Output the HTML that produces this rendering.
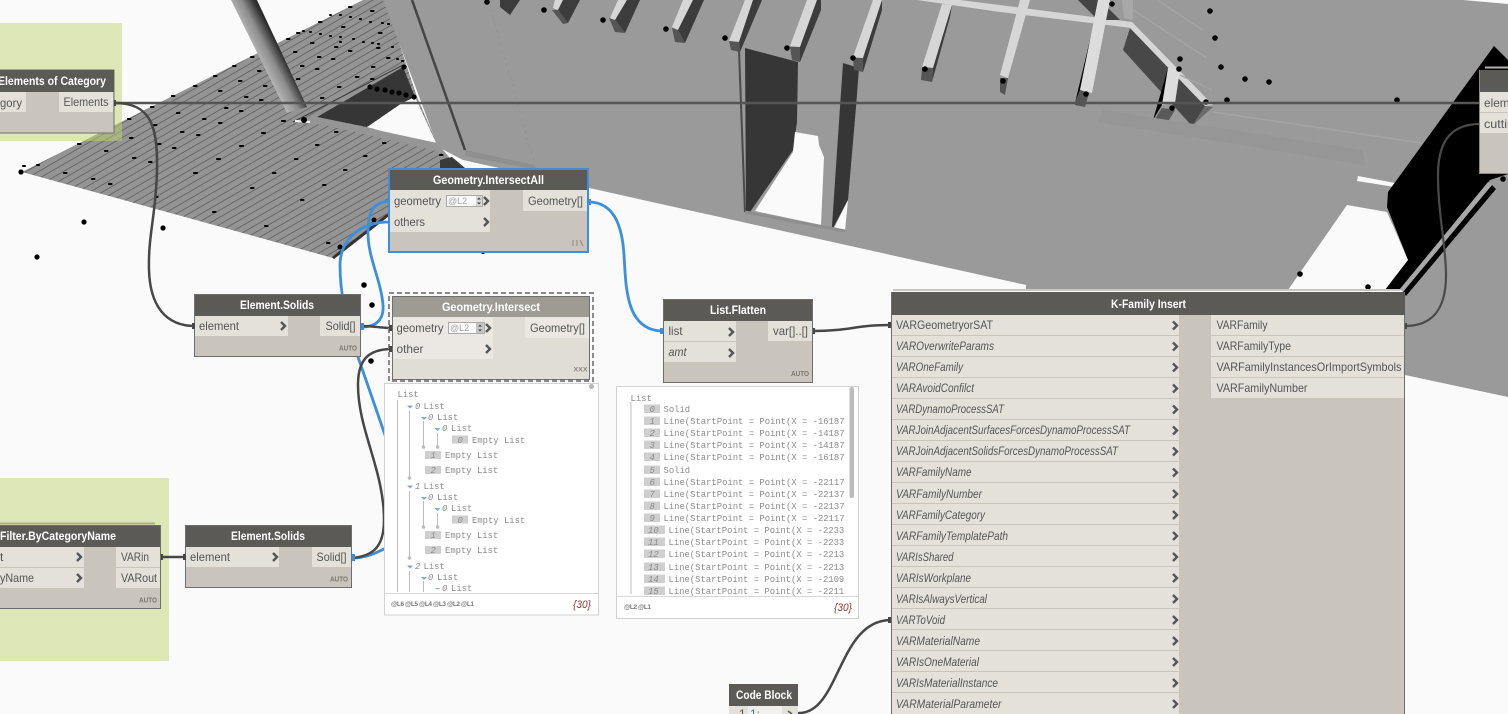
<!DOCTYPE html>
<html><head><meta charset="utf-8"><title>Dynamo graph</title>
<style>
html,body{margin:0;padding:0;background:#fafafa;overflow:hidden}
svg{display:block;position:absolute;left:0;top:0}
text{font-family:"Liberation Sans",sans-serif;font-size:12px;fill:#555}
.h{font-weight:bold;fill:#fff}
.i{font-style:italic}
.m{font-family:"Liberation Mono",monospace;font-size:8.9px;fill:#8c8c8c}
.n{font-family:"Liberation Mono",monospace;font-size:8.9px;font-style:italic;fill:#8c8c8c}
.a{font-size:7.5px;font-weight:bold;fill:#7a766f}
.x{font-size:6px;font-weight:bold;fill:#8a867f}
.l{font-size:6.5px;font-weight:bold;fill:#777}
.c{font-size:11px;font-style:italic;fill:#8a3a34}
.s{font-size:9px;fill:#a5a5a5}
</style></head><body>
<svg width="1508" height="714" viewBox="0 0 1508 714" xmlns="http://www.w3.org/2000/svg">
<defs>
<pattern id="ridge" patternUnits="userSpaceOnUse" width="20" height="6.2" patternTransform="rotate(-30)">
<rect width="20" height="6.2" fill="#949494"/><rect width="20" height=".8" fill="#5e5e5e"/>
</pattern>
<linearGradient id="pipe" gradientUnits="userSpaceOnUse" x1="258" y1="57" x2="283" y2="44">
<stop offset="0" stop-color="#b5b5b5"/><stop offset=".4" stop-color="#8d8d8d"/><stop offset=".82" stop-color="#2b2b2b"/><stop offset="1" stop-color="#3a3a3a"/>
</linearGradient>
</defs>
<rect width="1508" height="714" fill="#fafafa"/>

<!-- floor plate -->
<polygon points="22,172 363,0 385,0 417,97 440,150 456,165 388,215 333,258" fill="url(#ridge)"/>
<polygon points="402,103 415,97 438,147 367,127" fill="#fafafa"/>
<polygon points="317,117 403,67 415,97 402,103 367,127" fill="#363636"/>
<polygon points="293,122 317,117 437,143 456,165 440,152 325,125" fill="#969696"/>
<path d="M293 122L403 65" stroke="#3c3c3c" stroke-width="1"/>
<path d="M333 258L388 215" stroke="#333" stroke-width="3"/>
<polygon points="440,160 452,157 465,168 440,170" fill="#3a3a3a"/>
<polygon points="231,0 257,0 307,107 287,113" fill="url(#pipe)"/>
<path d="M295 121L310 122" stroke="#fafafa" stroke-width="2"/>
<path stroke="#000" stroke-width="2.1" stroke-linecap="round" fill="none" d="M23 166h2M37 165h2M64 173h2.500M92 179h2.500M109 184h2.500M78 144h2.500M105 151h2.500M133 158h2.500M149 162h2.500M130 138h2.500M154 125h2.500M128 119h2.500M151 107h2.500M177 113h2.500M172 96h2.500M203 119h2.500M219 123h2.500M181 132h2.500M197 135h2.500M158 144h2.500M173 148h2.500M155 197h2.500M194 173h3M217 159h3M240 146h3M262 133h3M282 121h3M213 212h2.500M251 188h2.500M273 173h2.500M295 159h2.500M316 145h2.500M335 132h2.500M265 226h2.500M301 200h2.500M323 185h2.500M344 170h2.500M364 156h2.500M383 143h2.500M327 243h2.500M440 155h2.500M194 86h2.500M214 76h2.500M233 66h2.500M251 57h2.500M219 91h2.500M239 81h2.500M258 71h2.500M245 97h2.500M264 86h2.500M260 100h2.500M225 108h2.500M240 111h2.500M287 39h2.500M297 33h2.500M319 22h2.500M349 7h2.500M371 11h2.500M311 43h2.500M294 52h2.500M342 27h2.500M301 66h2.500M318 57h2.500M335 47h2.500M316 69h2.500M332 59h2.500M349 51h2.500M297 79h2.500M338 87h2.500M321 98h2.500M356 77h2.500M371 79h2.500M372 67h2.500M387 58h2.500M379 33h2.500M377 48h2.500M340 42h1M353 39h1M363 42h1M372 43h1M378 44h1M303 31h1M310 32h1M320 34h1M330 36h1M340 37h1M330 15h1M340 15h1M350 17h1M360 19h1M370 22h1M382 23h1M388 24h1M392 47h1M397 59h1M402 61h1"/>

<!-- building -->
<polygon points="383,0 1463,0 1508,4 1508,397 1405,375 1405,290 1026,290 1026,285 463,160 438,147" fill="#9a9a9a"/>
<polygon points="465,150 535,165 537,170 465,156" fill="#8f8f8f"/>
<path d="M412 0L465 150" stroke="#454545" stroke-width="2.5"/>
<path d="M491 10L535 165" stroke="#8a8a8a" stroke-width=".5" stroke-dasharray="2 5" fill="none"/>

<!-- openings -->
<path d="M739 50L745 212" stroke="#4a4a4a" stroke-width="2"/>
<polygon points="745,48 798,62 797,122 793,150 750,212 746,211" fill="#363636"/>
<polygon points="795,132 818,136 819,145 824,157 821,225 755,211 793,152" fill="#fafafa"/>
<polygon points="843,63 859,68 856,107 848,200 833,228 832,226 840,107" fill="#363636"/>
<polygon points="848,200 845,231 834,228" fill="#fafafa"/>
<path d="M745 212L845 231" stroke="#8e8e8e" stroke-width="3"/>

<!-- joists -->
<polygon points="500,7 510,15 520,0 500,0" fill="#3c3c3c"/>
<polygon points="553,8 558,10 563,0 555,0" fill="#d6d6d6"/><polygon points="558,10 568,23 580,0 563,0" fill="#3c3c3c"/><polygon points="552,10 563,24 568,23 558,10" fill="#555"/>
<polygon points="610,18 615,21 627,0 618,0" fill="#d6d6d6"/><polygon points="615,20 625,33 640,0 627,0" fill="#3c3c3c"/><polygon points="609,18 615,32 625,33 615,20" fill="#555"/>
<polygon points="672,27 678,30 693,0 683,0" fill="#d6d6d6"/><polygon points="678,30 685,43 704,0 693,0" fill="#3c3c3c"/><polygon points="672,28 675,42 685,43 678,30" fill="#555"/>
<polygon points="729,41 739,42 753,0 745,0" fill="#d6d6d6"/><polygon points="739,42 740,52 762,0 753,0" fill="#3c3c3c"/><polygon points="729,41 731,50 740,52 739,42" fill="#555"/>
<polygon points="790,46 800,47 817,0 807,0" fill="#d6d6d6"/><polygon points="800,47 800,62 821,10 821,0 817,0" fill="#3c3c3c"/><polygon points="790,47 792,60 800,62 800,47" fill="#555"/>
<polygon points="853,57 863,58 882,0 873,0" fill="#d6d6d6"/><polygon points="863,58 863,72 882,10 882,0" fill="#3c3c3c"/><polygon points="853,58 854,70 863,72 863,58" fill="#555"/>
<polygon points="922,67 933,68 952,5 942,4" fill="#d6d6d6"/><polygon points="933,68 932,82 950,17 952,5" fill="#3c3c3c"/><polygon points="922,67 921,80 932,82 933,68" fill="#555"/>
<polygon points="917,0 960,0 1132,22 1132,28 1000,12" fill="#d6d6d6"/>
<polygon points="1000,75 1008,78 1030,0 1020,0" fill="#d6d6d6"/><polygon points="1000,78 1008,78 1005,95 1000,92" fill="#555"/>
<polygon points="1078,0 1095,17 1098,0" fill="#444"/>
<polygon points="1105,5 1120,20 1103,20" fill="#444"/>
<polygon points="1122,0 1133,0 1133,20 1124,18" fill="#a8a8a8"/>
<polygon points="1075,103 1080,90 1093,27" fill="#000"/>
<polygon points="1080,90 1092,93 1110,0 1098,0" fill="#dcdcdc"/>
<polygon points="1075,102 1075,105 1085,107 1089,93 1080,90" fill="#555"/>
<polygon points="1130,28 1123,50 1192,126 1207,107" fill="#484848"/>
<polygon points="1132,22 1213,105 1205,106 1130,28" fill="#d6d6d6"/>
<polygon points="1192,126 1213,107 1205,106" fill="#6c6c6c"/>
<polygon points="1168,68 1162,105 1153,120" fill="#000"/>
<polygon points="1168,68 1180,70 1175,103 1162,105" fill="#dcdcdc"/>
<polygon points="1153,122 1162,108 1175,110 1166,125" fill="#5a5a5a"/>
<polygon points="1098,122 1365,165 1362,150 1103,110" fill="#969696"/>
<path d="M1157 0L1203 30M1133 10L1207 58M1180 75L1212 90M1213 112L1422 143" stroke="#a4a4a4" stroke-width="1.5" fill="none"/>

<!-- right side void and black -->
<polygon points="1347,205 1387,212 1408,260 1385,290 1288,290" fill="#fafafa"/>
<polygon points="1358,176 1395,183 1395,187 1357,181" fill="#fafafa"/>
<polygon points="1494,46 1508,60 1508,174 1490,180 1400,289 1385,290 1408,260 1387,207 1388,192" fill="#000"/>
<polygon points="1400,289 1488,182 1492,185 1403,292" fill="#a8a8a8"/>
<polygon points="1403,292 1492,185 1496,189 1406,296" fill="#000"/>

<!-- big dots -->
<g fill="#000">
<circle cx="21" cy="172" r="2.6"/><circle cx="84" cy="222" r="2.6"/><circle cx="163" cy="228" r="2.6"/><circle cx="37" cy="257" r="2.6"/><circle cx="364" cy="285" r="2.8"/><circle cx="372" cy="305" r="2.8"/><circle cx="371" cy="361" r="2.8"/><circle cx="304" cy="120" r="3"/><circle cx="340" cy="247" r="2.5"/><circle cx="374" cy="220" r="2.5"/><circle cx="404" cy="67" r="2.6"/>
<circle cx="370" cy="87" r="2.6"/><circle cx="377" cy="89" r="2.6"/><circle cx="385" cy="90" r="2.6"/><circle cx="392" cy="92" r="2.6"/><circle cx="399" cy="93" r="2.6"/><circle cx="406" cy="95" r="2.6"/><circle cx="414" cy="97" r="2.6"/>
<circle cx="483" cy="252" r="2"/>
<circle cx="487" cy="2" r="2.8"/><circle cx="544" cy="10" r="2.8"/><circle cx="603" cy="20" r="2.8"/><circle cx="666" cy="29" r="2.8"/><circle cx="725" cy="38" r="2.8"/><circle cx="787" cy="48" r="2.8"/><circle cx="853" cy="58" r="2.8"/><circle cx="925" cy="69" r="2.8"/><circle cx="1003" cy="81" r="2.8"/><circle cx="1086" cy="94" r="2.8"/><circle cx="1112" cy="4" r="2.8"/>
<circle cx="1210" cy="11" r="2.8"/><circle cx="1215" cy="38" r="2.8"/><circle cx="1180" cy="59" r="2.8"/><circle cx="1179" cy="69" r="2.8"/><circle cx="1221" cy="67" r="2.8"/><circle cx="1245" cy="79" r="2.8"/><circle cx="1269" cy="82" r="2.8"/><circle cx="1206" cy="102" r="2.8"/><circle cx="1227" cy="100" r="2.8"/><circle cx="1397" cy="100" r="2.8"/><circle cx="1172" cy="108" r="2.8"/><circle cx="1300" cy="274" r="2.8"/><circle cx="1368" cy="287" r="2.8"/><circle cx="1503" cy="179" r="2.8"/>
</g>

<!-- groups -->
<rect x="0" y="23" width="122" height="118" fill="rgb(192,212,114)" opacity=".5"/>
<rect x="0" y="478" width="169" height="183" fill="rgb(192,212,114)" opacity=".5"/>

<!-- wires -->
<g fill="none" stroke-linecap="round">
<path d="M115 103H1480" stroke="#555" stroke-width="2.500"/>
<path d="M115 103C150 103 158 125 157 170C156 215 148 235 149 270C150 305 165 326 195 326" stroke="#474747" stroke-width="2.500"/>
<path d="M361 327C378 327 384 318 383 305C381 280 368 258 368 233C368 212 372 203 389 201" stroke="#3b8fdc" stroke-width="2.800"/>
<path d="M389 222C360 222 340 240 340 265C340 290 345 320 358 357L385 435" stroke="#3b8fdc" stroke-width="2.800"/>
<path d="M352 558C366 558 376 553 386 548" stroke="#3b8fdc" stroke-width="2.800"/>
<path d="M361 326C375 326 380 328 392 328" stroke="#474747" stroke-width="2.500"/>
<path d="M352 558C375 556 384 545 384 520C384 470 358 430 358 385C358 360 368 349 392 349" stroke="#474747" stroke-width="2.500"/>
<path d="M590 202C612 203 622 222 624 255C626 285 625 331 663 331" stroke="#3b8fdc" stroke-width="2.800"/>
<path d="M813 331C850 331 855 325 891 325" stroke="#474747" stroke-width="2.500"/>
<path d="M1405 326C1432 326 1446 310 1446 275C1446 245 1438 215 1438 175C1438 140 1452 124 1480 124" stroke="#4a4a4a" stroke-width="2.200"/>
<path d="M799 713C840 713 838 620 891 620" stroke="#474747" stroke-width="2.500"/>
<path d="M161 557H185" stroke="#474747" stroke-width="2.500"/>
</g>

<!-- Elements of Category -->
<rect x="-2" y="70" width="116" height="63" fill="#c9c5bd" stroke="#6e6e6e"/>
<rect x="-2" y="70" width="116" height="22" fill="#5c5a57"/>
<rect x="-2" y="92" width="28" height="20" fill="#e4e1db"/>
<rect x="59" y="92" width="54" height="20" fill="#e4e1db"/>
<text class="h" x="-2" y="85" textLength="108" lengthAdjust="spacingAndGlyphs">Elements of Category</text>
<text x="0" y="107" textLength="22" lengthAdjust="spacingAndGlyphs">gory</text>
<text x="63.5" y="106" textLength="45" lengthAdjust="spacingAndGlyphs">Elements</text>

<!-- Geometry.IntersectAll -->
<rect x="389" y="169" width="199" height="83" fill="#c9c5bd" stroke="#3b8fdc" stroke-width="2"/>
<rect x="390" y="170" width="197" height="20" fill="#5c5a57"/>
<rect x="390" y="190" width="100" height="42" fill="#e4e1db"/>
<rect x="523" y="190" width="64" height="21" fill="#e4e1db"/>
<text class="h" x="433" y="184" textLength="111" lengthAdjust="spacingAndGlyphs">Geometry.IntersectAll</text>
<text x="394" y="205" textLength="47" lengthAdjust="spacingAndGlyphs">geometry</text>
<text x="394" y="226" textLength="31" lengthAdjust="spacingAndGlyphs">others</text>
<text x="528" y="205" textLength="55" lengthAdjust="spacingAndGlyphs">Geometry[]</text>
<rect x="446.500" y="195.500" width="36" height="11" fill="#fafafa" stroke="#aaa"/>
<rect x="476" y="196" width="6" height="10" fill="#d5d5d5"/>
<path d="M477 199.500l2-2 2 2zM477 202.500l2 2 2-2z" fill="#444"/>
<text class="s" x="448" y="204">@L2</text>
<path d="M484 197l4 4-4 4M484 218l4 4-4 4" fill="none" stroke="#555" stroke-width="2.400"/>
<path d="M573 240v6M577 240v6M580 240l3 6" stroke="#8a867f" stroke-width="1" fill="none"/>

<!-- Geometry.Intersect -->
<rect x="389" y="293" width="204" height="88" fill="none" stroke="#8a8a8a" stroke-width="2" stroke-dasharray="5 3"/>
<rect x="392.500" y="296.500" width="197" height="83" fill="#e0ddd7" stroke="#6e6e6e"/>
<rect x="393" y="297" width="196" height="20" fill="#9e9b95"/>
<rect x="393" y="317" width="100" height="42" fill="#ebe8e3"/>
<rect x="525" y="317" width="64" height="21" fill="#ebe8e3"/>
<text class="h" x="442" y="311" textLength="98" lengthAdjust="spacingAndGlyphs">Geometry.Intersect</text>
<text x="396.500" y="332" textLength="47" lengthAdjust="spacingAndGlyphs">geometry</text>
<text x="396.500" y="353" textLength="27" lengthAdjust="spacingAndGlyphs">other</text>
<text x="530" y="332" textLength="55" lengthAdjust="spacingAndGlyphs">Geometry[]</text>
<rect x="448.500" y="322.500" width="36" height="11" fill="#fafafa" stroke="#aaa"/>
<rect x="476" y="323" width="8" height="10" fill="#c5c5c5"/>
<path d="M478 326.500l2-2 2 2zM478 329.500l2 2 2-2z" fill="#444"/>
<text class="s" x="450" y="331">@L2</text>
<path d="M486 324l4 4-4 4M486 345l4 4-4 4" fill="none" stroke="#555" stroke-width="2.400"/>
<text class="x" x="573.500" y="371.500" textLength="14" lengthAdjust="spacingAndGlyphs">XXX</text>

<!-- List.Flatten -->
<rect x="663.500" y="299.500" width="149" height="83" fill="#c9c5bd" stroke="#6e6e6e"/>
<rect x="664" y="300" width="148" height="21" fill="#5c5a57"/>
<rect x="664" y="321" width="72" height="20" fill="#e4e1db"/>
<rect x="664" y="342" width="72" height="20" fill="#e4e1db"/>
<rect x="768" y="321" width="44" height="20" fill="#e4e1db"/>
<text class="h" x="710" y="314" textLength="56" lengthAdjust="spacingAndGlyphs">List.Flatten</text>
<text x="668.500" y="335" textLength="14" lengthAdjust="spacingAndGlyphs">list</text>
<text class="i" x="668.500" y="356" textLength="18" lengthAdjust="spacingAndGlyphs">amt</text>
<text x="773" y="335" textLength="35" lengthAdjust="spacingAndGlyphs">var[]..[]</text>
<path d="M729 328l4 4-4 4M729 349l4 4-4 4" fill="none" stroke="#555" stroke-width="2.400"/>
<text class="a" x="791" y="376" textLength="18" lengthAdjust="spacingAndGlyphs">AUTO</text>

<!-- Element.Solids 1 -->
<rect x="194.500" y="294.500" width="166" height="62" fill="#c9c5bd" stroke="#6e6e6e"/>
<rect x="195" y="295" width="165" height="21" fill="#5c5a57"/>
<rect x="195" y="316" width="93" height="20" fill="#e4e1db"/>
<rect x="320" y="316" width="40" height="20" fill="#e4e1db"/>
<text class="h" x="240" y="309" textLength="74" lengthAdjust="spacingAndGlyphs">Element.Solids</text>
<text x="199" y="330" textLength="40" lengthAdjust="spacingAndGlyphs">element</text>
<text x="325.500" y="330" textLength="30" lengthAdjust="spacingAndGlyphs">Solid[]</text>
<path d="M281 322l4 4-4 4" fill="none" stroke="#555" stroke-width="2.400"/>
<text class="a" x="339" y="350.500" textLength="18" lengthAdjust="spacingAndGlyphs">AUTO</text>

<!-- Element.Solids 2 -->
<rect x="185.500" y="525.500" width="166" height="62" fill="#c9c5bd" stroke="#6e6e6e"/>
<rect x="186" y="526" width="165" height="21" fill="#5c5a57"/>
<rect x="186" y="547" width="93" height="20" fill="#e4e1db"/>
<rect x="312" y="547" width="39" height="20" fill="#e4e1db"/>
<text class="h" x="231" y="540" textLength="74" lengthAdjust="spacingAndGlyphs">Element.Solids</text>
<text x="190" y="561" textLength="40" lengthAdjust="spacingAndGlyphs">element</text>
<text x="316.500" y="561" textLength="30" lengthAdjust="spacingAndGlyphs">Solid[]</text>
<path d="M273 553l4 4-4 4" fill="none" stroke="#555" stroke-width="2.400"/>
<text class="a" x="330" y="581.500" textLength="18" lengthAdjust="spacingAndGlyphs">AUTO</text>

<!-- Filter -->
<path d="M0 523.500H155" fill="none" stroke="#aeaba3" stroke-width="2"/>
<rect x="-2" y="525.500" width="162.500" height="83" fill="#c9c5bd" stroke="#6e6e6e"/>
<rect x="-2" y="526" width="162" height="21" fill="#5c5a57"/>
<rect x="-2" y="547" width="86" height="20" fill="#e4e1db"/>
<rect x="-2" y="568" width="86" height="20" fill="#e4e1db"/>
<rect x="116" y="547" width="44" height="20" fill="#e4e1db"/>
<rect x="116" y="568" width="44" height="20" fill="#e4e1db"/>
<text class="h" x="0" y="540" textLength="116" lengthAdjust="spacingAndGlyphs">Filter.ByCategoryName</text>
<text x="0" y="561">t</text>
<text x="0" y="582" textLength="34" lengthAdjust="spacingAndGlyphs">yName</text>
<text x="121" y="561" textLength="28" lengthAdjust="spacingAndGlyphs">VARin</text>
<text x="121" y="582" textLength="36" lengthAdjust="spacingAndGlyphs">VARout</text>
<path d="M77 553l4 4-4 4M77 574l4 4-4 4" fill="none" stroke="#555" stroke-width="2.400"/>
<text class="a" x="139" y="602.500" textLength="18" lengthAdjust="spacingAndGlyphs">AUTO</text>

<!-- right node -->
<path d="M1485 67.500H1510" stroke="#b5b2aa" stroke-width="2"/>
<rect x="1479.500" y="70.500" width="40" height="103" fill="#c9c5bd" stroke="#8a8a8a"/>
<rect x="1480" y="70" width="40" height="22" fill="#5c5a57"/>
<rect x="1480" y="92" width="40" height="20" fill="#e4e1db"/>
<rect x="1480" y="113" width="40" height="20" fill="#e4e1db"/>
<text x="1484" y="107" textLength="48" lengthAdjust="spacingAndGlyphs">elements</text>
<text x="1484" y="128" textLength="60" lengthAdjust="spacingAndGlyphs">cuttingTool</text>

<!-- Code Block -->
<rect x="729" y="684" width="69" height="22" fill="#5c5a57"/>
<rect x="729" y="706" width="69" height="8" fill="#e4e1db"/>
<rect x="748" y="706" width="34" height="8" fill="#f2f0ec"/>
<text class="h" x="736" y="699" textLength="56" lengthAdjust="spacingAndGlyphs">Code Block</text>
<text x="739" y="718">1</text>
<text x="750" y="718" style="fill:#3b78b8">1:</text>
<path d="M788 711l4 3" fill="none" stroke="#555" stroke-width="1.500"/>

<!-- K-Family Insert -->
<path d="M893 290H1400" stroke="#c8c6c0" stroke-width="2"/>
<rect x="891.500" y="292.500" width="513" height="430" fill="#c9c5bd" stroke="#6e6e6e"/>
<rect x="892" y="292" width="513" height="23" fill="#5c5a57"/>
<rect x="892" y="315" width="287" height="400" fill="#e4e1db"/>
<rect x="1211" y="315" width="193" height="83" fill="#e4e1db"/>
<path d="M892 335.500h287M892 356.500h287M892 377.500h287M892 398.500h287M892 419.500h287M892 440.500h287M892 461.500h287M892 482.500h287M892 503.500h287M892 524.500h287M892 545.500h287M892 566.500h287M892 587.500h287M892 608.500h287M892 629.500h287M892 650.500h287M892 671.500h287M892 692.500h287M1211 335.500h193M1211 356.500h193M1211 377.500h193" stroke="#c9c5bd"/>
<path d="M1173 321.500l4 4-4 4M1173 342.500l4 4-4 4M1173 363.500l4 4-4 4M1173 384.500l4 4-4 4M1173 405.500l4 4-4 4M1173 426.500l4 4-4 4M1173 447.500l4 4-4 4M1173 468.500l4 4-4 4M1173 490l4 4-4 4M1173 511l4 4-4 4M1173 532l4 4-4 4M1173 553l4 4-4 4M1173 574l4 4-4 4M1173 595l4 4-4 4M1173 616l4 4-4 4M1173 637l4 4-4 4M1173 658l4 4-4 4M1173 679l4 4-4 4M1173 700l4 4-4 4" fill="none" stroke="#555" stroke-width="2.400"/>
<text class="h" x="1111" y="308" textLength="75" lengthAdjust="spacingAndGlyphs">K-Family Insert</text>
<text x="896" y="329" textLength="97" lengthAdjust="spacingAndGlyphs">VARGeometryorSAT</text>
<text class="i" x="896" y="350" textLength="98" lengthAdjust="spacingAndGlyphs">VAROverwriteParams</text>
<text class="i" x="896" y="371" textLength="67" lengthAdjust="spacingAndGlyphs">VAROneFamily</text>
<text class="i" x="896" y="392" textLength="78" lengthAdjust="spacingAndGlyphs">VARAvoidConfilct</text>
<text class="i" x="896" y="413" textLength="108" lengthAdjust="spacingAndGlyphs">VARDynamoProcessSAT</text>
<text class="i" x="896" y="434" textLength="234" lengthAdjust="spacingAndGlyphs">VARJoinAdjacentSurfacesForcesDynamoProcessSAT</text>
<text class="i" x="896" y="455" textLength="222" lengthAdjust="spacingAndGlyphs">VARJoinAdjacentSolidsForcesDynamoProcessSAT</text>
<text class="i" x="896" y="476" textLength="75.500" lengthAdjust="spacingAndGlyphs">VARFamilyName</text>
<text class="i" x="896" y="498" textLength="86" lengthAdjust="spacingAndGlyphs">VARFamilyNumber</text>
<text class="i" x="896" y="519" textLength="89" lengthAdjust="spacingAndGlyphs">VARFamilyCategory</text>
<text class="i" x="896" y="540" textLength="112" lengthAdjust="spacingAndGlyphs">VARFamilyTemplatePath</text>
<text class="i" x="896" y="561" textLength="57.500" lengthAdjust="spacingAndGlyphs">VARIsShared</text>
<text class="i" x="896" y="582" textLength="75" lengthAdjust="spacingAndGlyphs">VARIsWorkplane</text>
<text class="i" x="896" y="603" textLength="91" lengthAdjust="spacingAndGlyphs">VARIsAlwaysVertical</text>
<text class="i" x="896" y="624" textLength="49" lengthAdjust="spacingAndGlyphs">VARToVoid</text>
<text class="i" x="896" y="645" textLength="84" lengthAdjust="spacingAndGlyphs">VARMaterialName</text>
<text class="i" x="896" y="666" textLength="83" lengthAdjust="spacingAndGlyphs">VARIsOneMaterial</text>
<text class="i" x="896" y="687" textLength="102" lengthAdjust="spacingAndGlyphs">VARIsMaterialInstance</text>
<text class="i" x="896" y="708" textLength="105.500" lengthAdjust="spacingAndGlyphs">VARMaterialParameter</text>
<text x="1216.500" y="329" textLength="51" lengthAdjust="spacingAndGlyphs">VARFamily</text>
<text x="1216.500" y="350" textLength="74.500" lengthAdjust="spacingAndGlyphs">VARFamilyType</text>
<text x="1216.500" y="371" textLength="185" lengthAdjust="spacingAndGlyphs">VARFamilyInstancesOrImportSymbols</text>
<text x="1216.500" y="392" textLength="91" lengthAdjust="spacingAndGlyphs">VARFamilyNumber</text>

<!-- port nubs -->
<path d="M114 100h2v6h-2zM192 323h3v6h-3zM389 325h3v6h-3zM389 346h3v6h-3zM813 328h2v6h-2zM888 322h3v6h-3zM888 617h3v6h-3zM1405 323h2v6h-2zM161 554h2v6h-2zM183 554h3v6h-3z" fill="#474747"/>
<path d="M361 323h3v7h-3zM352 554h3v7h-3zM588 199h3v6h-3zM660 328h3v6h-3z" fill="#3b8fdc"/>

<!-- List preview 1 -->
<rect x="384.500" y="383.500" width="214" height="231.500" fill="#fff" stroke="#d2d2d2"/>
<circle cx="591.500" cy="386.500" r="2.500" fill="#b5b5b5"/>
<path d="M385 593.500H598" stroke="#d8d8d8"/>
<path d="M397.500 400V592M409.500 411V478M423.500 421V447M437.500 433V447M409.500 491V558M423.500 501V527M437.500 513V527M409.500 571V592M423.500 581V592" stroke="#bdbdbd" fill="none"/>
<g fill="#bdbdbd"><circle cx="409.500" cy="478" r="1.800"/><circle cx="423.500" cy="447" r="1.800"/><circle cx="437.500" cy="447" r="1.800"/><circle cx="409.500" cy="558" r="1.800"/><circle cx="423.500" cy="527" r="1.800"/><circle cx="437.500" cy="527" r="1.800"/></g>
<path d="M407 405.500h6l-3 3zM421 417h6l-3 3zM434.500 428h6l-3 3zM407 485.500h6l-3 3zM421 497h6l-3 3zM434.500 508h6l-3 3zM407 565.500h6l-3 3zM421 577h6l-3 3zM434.500 588h6l-3 1.500z" fill="#7ba9d6"/>
<g fill="#cfcfcf"><rect x="452" y="435.500" width="16" height="8"/><rect x="425" y="451" width="16" height="8"/><rect x="425" y="466" width="16" height="8"/><rect x="452" y="515.500" width="16" height="8"/><rect x="425" y="531" width="16" height="8"/><rect x="425" y="546" width="16" height="8"/></g>
<text class="m" x="397.500" y="397">List</text>
<text class="n" x="415" y="409">0</text><text class="m" x="423.500" y="409">List</text>
<text class="n" x="428" y="420">0</text><text class="m" x="437" y="420">List</text>
<text class="n" x="442" y="431">0</text><text class="m" x="451" y="431">List</text>
<text class="n" x="457.500" y="443">0</text><text class="m" x="472" y="443">Empty List</text>
<text class="n" x="430.500" y="458">1</text><text class="m" x="445" y="458">Empty List</text>
<text class="n" x="430.500" y="473">2</text><text class="m" x="445" y="473">Empty List</text>
<text class="n" x="415" y="489">1</text><text class="m" x="423.500" y="489">List</text>
<text class="n" x="428" y="500">0</text><text class="m" x="437" y="500">List</text>
<text class="n" x="442" y="511">0</text><text class="m" x="451" y="511">List</text>
<text class="n" x="457.500" y="523">0</text><text class="m" x="472" y="523">Empty List</text>
<text class="n" x="430.500" y="538">1</text><text class="m" x="445" y="538">Empty List</text>
<text class="n" x="430.500" y="553">2</text><text class="m" x="445" y="553">Empty List</text>
<text class="n" x="415" y="569">2</text><text class="m" x="423.500" y="569">List</text>
<text class="n" x="428" y="580">0</text><text class="m" x="437" y="580">List</text>
<text class="n" x="442" y="591">0</text><text class="m" x="451" y="591">List</text>
<text class="l" x="391" y="606" textLength="83" lengthAdjust="spacing">@L6 @L5 @L4 @L3 @L2 @L1</text>
<text class="c" x="573" y="608" textLength="18" lengthAdjust="spacingAndGlyphs">{30}</text>

<!-- List preview 2 -->
<rect x="616.500" y="386.500" width="242" height="232" fill="#fff" stroke="#d2d2d2"/>
<path d="M617 596.500H858" stroke="#d8d8d8"/>
<path d="M631 402V594" stroke="#bdbdbd"/>
<rect x="849.500" y="387" width="4.500" height="111" rx="2" fill="#bcbcbc"/>
<g fill="#cfcfcf">
<rect x="644" y="404.500" width="16" height="8.500"/><rect x="644" y="416.500" width="16" height="8.500"/><rect x="644" y="428.500" width="16" height="8.500"/><rect x="644" y="440.500" width="16" height="8.500"/><rect x="644" y="452.500" width="16" height="8.500"/><rect x="644" y="465.500" width="16" height="8.500"/><rect x="644" y="477.500" width="16" height="8.500"/><rect x="644" y="489.500" width="16" height="8.500"/><rect x="644" y="501.500" width="16" height="8.500"/><rect x="644" y="513.500" width="16" height="8.500"/>
<rect x="644" y="525.500" width="21" height="8.500"/><rect x="644" y="537.500" width="21" height="8.500"/><rect x="644" y="549.500" width="21" height="8.500"/><rect x="644" y="562.500" width="21" height="8.500"/><rect x="644" y="574.500" width="21" height="8.500"/><rect x="644" y="586.500" width="21" height="8.500"/>
</g>
<text class="m" x="630.500" y="401">List</text>
<text class="n" x="649.500" y="412">0</text><text class="m" x="663.500" y="412">Solid</text>
<text class="n" x="649.500" y="424">1</text><text class="m" x="663.500" y="424">Line(StartPoint = Point(X = -16187</text>
<text class="n" x="649.500" y="436">2</text><text class="m" x="663.500" y="436">Line(StartPoint = Point(X = -14187</text>
<text class="n" x="649.500" y="448">3</text><text class="m" x="663.500" y="448">Line(StartPoint = Point(X = -14187</text>
<text class="n" x="649.500" y="460">4</text><text class="m" x="663.500" y="460">Line(StartPoint = Point(X = -16187</text>
<text class="n" x="649.500" y="473">5</text><text class="m" x="663.500" y="473">Solid</text>
<text class="n" x="649.500" y="485">6</text><text class="m" x="663.500" y="485">Line(StartPoint = Point(X = -22117</text>
<text class="n" x="649.500" y="497">7</text><text class="m" x="663.500" y="497">Line(StartPoint = Point(X = -22137</text>
<text class="n" x="649.500" y="509">8</text><text class="m" x="663.500" y="509">Line(StartPoint = Point(X = -22137</text>
<text class="n" x="649.500" y="521">9</text><text class="m" x="663.500" y="521">Line(StartPoint = Point(X = -22117</text>
<text class="n" x="648" y="533">10</text><text class="m" x="668.500" y="533">Line(StartPoint = Point(X = -2233</text>
<text class="n" x="648" y="545">11</text><text class="m" x="668.500" y="545">Line(StartPoint = Point(X = -2233</text>
<text class="n" x="648" y="557">12</text><text class="m" x="668.500" y="557">Line(StartPoint = Point(X = -2213</text>
<text class="n" x="648" y="570">13</text><text class="m" x="668.500" y="570">Line(StartPoint = Point(X = -2213</text>
<text class="n" x="648" y="582">14</text><text class="m" x="668.500" y="582">Line(StartPoint = Point(X = -2109</text>
<text class="n" x="648" y="594">15</text><text class="m" x="668.500" y="594">Line(StartPoint = Point(X = -2211</text>
<text class="l" x="624" y="609" textLength="27" lengthAdjust="spacing">@L2 @L1</text>
<text class="c" x="834" y="611" textLength="18" lengthAdjust="spacingAndGlyphs">{30}</text>
</svg>
</body></html>
